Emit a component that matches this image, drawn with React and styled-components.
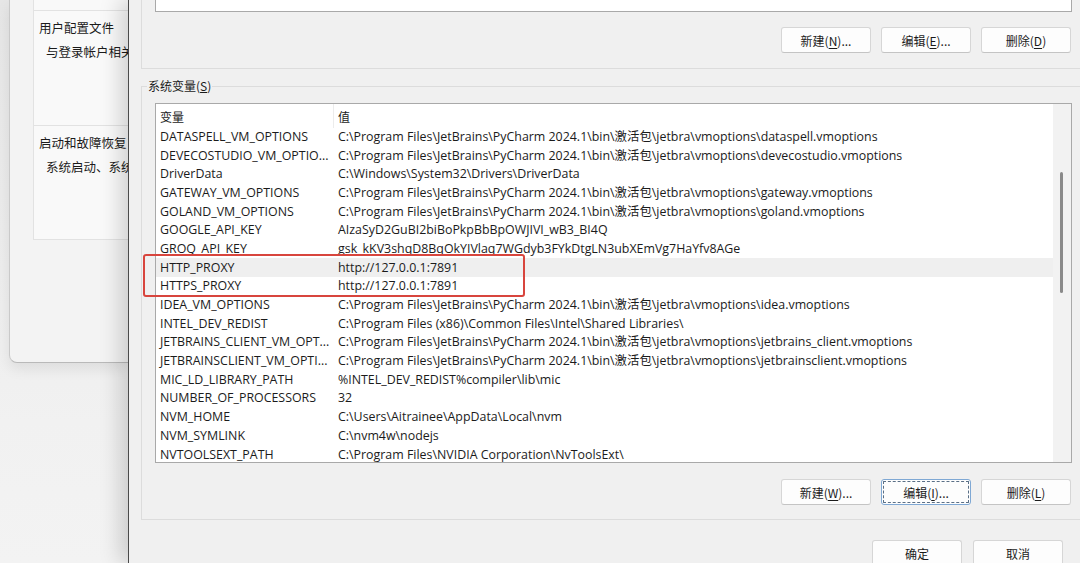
import React from "react";
import styled, { createGlobalStyle } from "styled-components";

const GlobalStyle = createGlobalStyle`
  html, body {
    margin: 0;
    padding: 0;
    width: 1080px;
    height: 563px;
    overflow: hidden;
    background: #f2f2f2;
  }
  * { box-sizing: border-box; }
`;

const UI_FONT = `"Open Sans", "Noto Sans CJK SC", sans-serif`;
const CJK_FONT = `"Noto Sans CJK SC", "Open Sans", sans-serif`;

const Page = styled.div`
  display: flex;
  width: 1080px;
  height: 563px;
  overflow: hidden;
  color: #1b1b1b;
  font-family: ${CJK_FONT};
  font-size: 12px;
`;

const BackArea = styled.div`
  width: 128px;
  flex-shrink: 0;
  display: flex;
  flex-direction: column;
  background: linear-gradient(180deg, #e6e6e6 0%, #f1f1f1 75%, #f3f3f3 100%);
`;

const BackWindow = styled.div`
  margin-left: 9px;
  width: 119px;
  height: 363px;
  overflow: hidden;
  background: #f3f3f3;
  border-left: 1px solid #c9c9c9;
  border-bottom: 1px solid #b9b9b9;
  border-bottom-left-radius: 8px;
  padding-left: 23px;
  display: flex;
  flex-direction: column;
  box-shadow: 0 6px 14px rgba(0, 0, 0, 0.08);
`;

const BackCard = styled.div`
  width: 200px;
  height: ${(p) => p.$h}px;
  flex-shrink: 0;
  background: #f9f9f9;
  border: 1px solid #e2e2e2;
  border-top: ${(p) => (p.$first ? "none" : "1px solid #e2e2e2")};
  margin-top: ${(p) => (p.$first ? 0 : -1)}px;
  padding: 8px 0 0 5px;
  display: flex;
  flex-direction: column;
  align-items: flex-start;
  gap: 6px;
  white-space: nowrap;
`;

const BackTitle = styled.div`
  font-size: 12.5px;
  line-height: 18px;
  color: #1b1b1b;
`;

const BackText = styled.div`
  font-size: 12.5px;
  line-height: 18px;
  padding-left: 7px;
  color: #1b1b1b;
`;

const Dialog = styled.div`
  position: relative;
  z-index: 1;
  flex: 1;
  min-width: 0;
  background: #f0f0f0;
  border-left: 1.5px solid #4a4a4a;
  box-shadow: -8px 0 20px rgba(0, 0, 0, 0.16);
  padding-left: 12px;
  display: flex;
  flex-direction: column;
  overflow: hidden;
`;

const Group = styled.div`
  position: relative;
  margin-right: -60px;
  border: 1px solid #dcdcdc;
  display: flex;
  flex-direction: column;
  padding-left: 13px;
`;

const UpperGroup = styled(Group)`
  height: 69px;
  flex-shrink: 0;
  border-top: none;
`;

const LowerGroup = styled(Group)`
  margin-top: 17px;
  padding-bottom: 14px;
  flex-shrink: 0;
`;

const GroupLabel = styled.div`
  align-self: flex-start;
  margin: -10px 0 0 -8px;
  padding: 0 1px;
  background: #f0f0f0;
  font-size: 12px;
  line-height: 18px;
  color: #1b1b1b;
`;

const Column = styled.div`
  width: 917px;
  display: flex;
  flex-direction: column;
`;

const UpperList = styled.div`
  height: 12px;
  background: #ffffff;
  border: 1px solid #a9a9a9;
  border-top: none;
`;

const ButtonRow = styled.div`
  display: flex;
  justify-content: flex-end;
  gap: 10px;
  padding-right: 1px;
  margin-top: ${(p) => p.$mt}px;
`;

const Button = styled.div`
  width: 90px;
  height: 26px;
  display: flex;
  align-items: center;
  justify-content: center;
  background: #fdfdfd;
  border: 1px solid ${(p) => (p.$focused ? "#7fa8d4" : "#d6d6d6")};
  border-bottom-color: ${(p) => (p.$focused ? "#7fa8d4" : "#c4c4c4")};
  border-radius: 3px;
  font-family: ${CJK_FONT};
  font-size: 12px;
  color: #1b1b1b;
  outline: ${(p) => (p.$focused ? "1px dashed #5a6f86" : "none")};
  outline-offset: -3px;
  white-space: nowrap;

  u {
    text-underline-offset: 2px;
  }
`;

const List = styled.div`
  position: relative;
  margin-top: 8px;
  height: 360px;
  background: #ffffff;
  border: 1px solid #a9a9a9;
  display: flex;
`;

const Table = styled.div`
  flex: 1;
  min-width: 0;
  display: flex;
  flex-direction: column;
  overflow: hidden;
`;

const HeaderRow = styled.div`
  display: grid;
  grid-template-columns: 178px 1fr;
  height: 23.5px;
  flex-shrink: 0;
  align-items: stretch;
  font-family: ${CJK_FONT};
  font-size: 12px;
`;

const HeaderCell = styled.div`
  display: flex;
  align-items: center;
  padding: 2px 0 0 4px;
  border-right: ${(p) => (p.$divider ? "1px solid #ececec" : "none")};
`;

const Row = styled.div`
  display: grid;
  grid-template-columns: 178px 1fr;
  height: 18.7px;
  flex-shrink: 0;
  align-items: center;
  background: ${(p) => (p.$hover ? "#efefef" : "transparent")};
  font-family: ${UI_FONT};
  font-size: 12.4px;
  color: #1b1b1b;
`;

const Cell = styled.div`
  padding-left: 4px;
  white-space: nowrap;
  overflow: hidden;
  line-height: 18px;
`;

const ScrollTrack = styled.div`
  width: 18px;
  flex-shrink: 0;
  background: #f2f2f2;
  padding: 68px 0 0 7px;
`;

const ScrollThumb = styled.div`
  width: 3px;
  height: 121px;
  border-radius: 2px;
  background: #8a8a8a;
`;

const RedMark = styled.div`
  position: absolute;
  left: -13px;
  top: 150px;
  width: 382px;
  height: 43px;
  border: 2px solid #d8453d;
  border-radius: 3px;
  pointer-events: none;
`;

const Footer = styled.div`
  display: flex;
  justify-content: flex-end;
  gap: 11px;
  padding-right: 17px;
  margin-top: 20px;
`;

const rows = [
  ["DATASPELL_VM_OPTIONS", "C:\\Program Files\\JetBrains\\PyCharm 2024.1\\bin\\激活包\\jetbra\\vmoptions\\dataspell.vmoptions"],
  ["DEVECOSTUDIO_VM_OPTIO...", "C:\\Program Files\\JetBrains\\PyCharm 2024.1\\bin\\激活包\\jetbra\\vmoptions\\devecostudio.vmoptions"],
  ["DriverData", "C:\\Windows\\System32\\Drivers\\DriverData"],
  ["GATEWAY_VM_OPTIONS", "C:\\Program Files\\JetBrains\\PyCharm 2024.1\\bin\\激活包\\jetbra\\vmoptions\\gateway.vmoptions"],
  ["GOLAND_VM_OPTIONS", "C:\\Program Files\\JetBrains\\PyCharm 2024.1\\bin\\激活包\\jetbra\\vmoptions\\goland.vmoptions"],
  ["GOOGLE_API_KEY", "AIzaSyD2GuBI2biBoPkpBbBpOWJIVI_wB3_BI4Q"],
  ["GROQ_API_KEY", "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"],
  ["HTTP_PROXY", "http://127.0.0.1:7891", true],
  ["HTTPS_PROXY", "http://127.0.0.1:7891"],
  ["IDEA_VM_OPTIONS", "C:\\Program Files\\JetBrains\\PyCharm 2024.1\\bin\\激活包\\jetbra\\vmoptions\\idea.vmoptions"],
  ["INTEL_DEV_REDIST", "C:\\Program Files (x86)\\Common Files\\Intel\\Shared Libraries\\"],
  ["JETBRAINS_CLIENT_VM_OPT...", "C:\\Program Files\\JetBrains\\PyCharm 2024.1\\bin\\激活包\\jetbra\\vmoptions\\jetbrains_client.vmoptions"],
  ["JETBRAINSCLIENT_VM_OPTI...", "C:\\Program Files\\JetBrains\\PyCharm 2024.1\\bin\\激活包\\jetbra\\vmoptions\\jetbrainsclient.vmoptions"],
  ["MIC_LD_LIBRARY_PATH", "%INTEL_DEV_REDIST%compiler\\lib\\mic"],
  ["NUMBER_OF_PROCESSORS", "32"],
  ["NVM_HOME", "C:\\Users\\Aitrainee\\AppData\\Local\\nvm"],
  ["NVM_SYMLINK", "C:\\nvm4w\\nodejs"],
  ["NVTOOLSEXT_PATH", "C:\\Program Files\\NVIDIA Corporation\\NvToolsExt\\"],
];

export default function App() {
  return (
    <>
      <GlobalStyle />
      <Page>
        <BackArea>
          <BackWindow>
            <BackCard $first $h={11} />
            <BackCard $h={116}>
              <BackTitle>用户配置文件</BackTitle>
              <BackText>与登录帐户相关</BackText>
            </BackCard>
            <BackCard $h={115}>
              <BackTitle>启动和故障恢复</BackTitle>
              <BackText>系统启动、系统</BackText>
            </BackCard>
          </BackWindow>
        </BackArea>

        <Dialog>
          <UpperGroup>
            <Column>
              <UpperList />
              <ButtonRow $mt={15}>
                <Button>新建(<u>N</u>)...</Button>
                <Button>编辑(<u>E</u>)...</Button>
                <Button>删除(<u>D</u>)</Button>
              </ButtonRow>
            </Column>
          </UpperGroup>

          <LowerGroup>
            <GroupLabel>系统变量(<u>S</u>)</GroupLabel>
            <Column>
              <List>
                <Table>
                  <HeaderRow>
                    <HeaderCell $divider>变量</HeaderCell>
                    <HeaderCell>值</HeaderCell>
                  </HeaderRow>
                  {rows.map(([name, value, hover]) => (
                    <Row key={name} $hover={hover}>
                      <Cell>{name}</Cell>
                      <Cell>{value}</Cell>
                    </Row>
                  ))}
                </Table>
                <ScrollTrack>
                  <ScrollThumb />
                </ScrollTrack>
                <RedMark />
              </List>
              <ButtonRow $mt={16}>
                <Button>新建(<u>W</u>)...</Button>
                <Button $focused>编辑(<u>I</u>)...</Button>
                <Button>删除(<u>L</u>)</Button>
              </ButtonRow>
            </Column>
          </LowerGroup>

          <Footer>
            <Button>确定</Button>
            <Button>取消</Button>
          </Footer>
        </Dialog>
      </Page>
    </>
  );
}
